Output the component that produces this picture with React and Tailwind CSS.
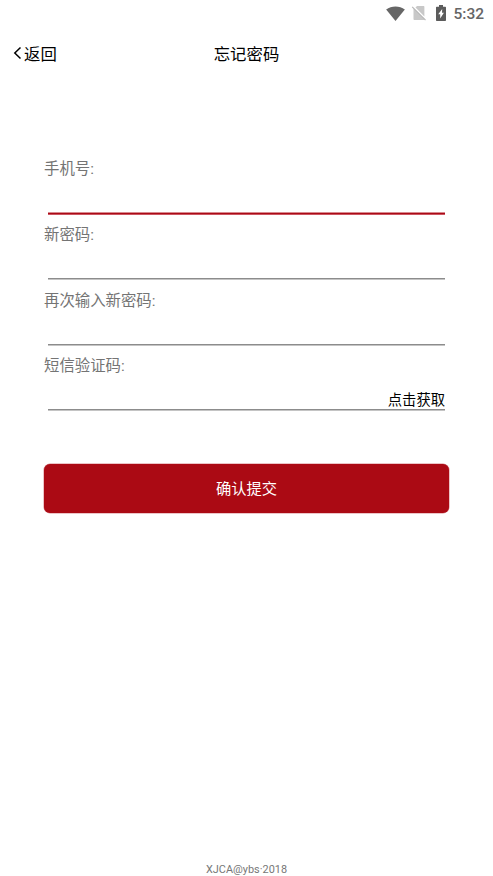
import clsx from 'clsx';

const fields = [
  { id: 'phone', label: '手机号:', type: 'tel', active: true },
  { id: 'password', label: '新密码:', type: 'password' },
  { id: 'confirm', label: '再次输入新密码:', type: 'password' },
  { id: 'code', label: '短信验证码:', type: 'text', action: '点击获取' },
];

function StatusBar() {
  return (
    <div className="flex h-7 items-center justify-end pr-[9px] pb-0.5 text-[#666]">
      <svg width="19" height="15" viewBox="0 0 20 16" fill="currentColor">
        <path d="M0 3.7C5.7-.7 14.3-.7 20 3.7L10 16z" />
      </svg>
      {/* No SIM */}
      <svg className="ml-1.5" width="16" height="16" viewBox="0 0 16 16">
        <path d="M6 1h6.4c.6 0 1 .4 1 1v9.600L4.500 2.500z" fill="#c8c8c8" />
        <path d="M2.500 3.100l11 11c-.2.500-.5.900-1 .9h-9c-.6 0-1-.4-1-1z" fill="#c8c8c8" />
        <path d="M1.200 1.800l13.300 13.300" stroke="#b8b8b8" strokeWidth="1.200" />
      </svg>
      {/* Charging battery */}
      <svg className="ml-[9px]" width="10" height="16" viewBox="0 0 10 16">
        <path d="M3 0h4v1.700h2c.6 0 1 .4 1 1v12.300c0 .6-.4 1-1 1H1c-.6 0-1-.4-1-1v-12.300c0-.6.4-1 1-1h2z" fill="#5c5c5c" />
        <path d="M6.200 4L2.200 9.300h2v4.300l3.700-5.800H6z" fill="#fff" />
      </svg>
      <span className="ml-[7px] pt-px font-[Roboto] text-[15.500px] leading-4 font-medium">5:32</span>
    </div>
  );
}

function Header() {
  return (
    <header className="grid h-[52px] grid-cols-[1fr_auto_1fr] items-center pt-0.5 text-[16.4px] text-black">
      <button className="flex items-center pl-[13px]">
        <svg className="-mt-1" width="11" height="14" viewBox="0 0 11 14" fill="none" stroke="currentColor" strokeWidth="1.5">
          <path d="M7.500 1.500L1.800 7l5.700 5.500" />
        </svg>
        返回
      </button>
      <h1>忘记密码</h1>
    </header>
  );
}

function Field({ id, label, type, active, action }) {
  return (
    <div className="flex h-[65.7px] flex-col">
      <label htmlFor={id} className="text-[15.4px] leading-6 text-[#747474]">
        {label}
      </label>
      <div
        className={clsx(
          'mx-1 flex items-end border-b',
          active
            ? 'h-[33px] border-[#aa0a16] shadow-[0_1px_0_#cc5560,inset_0_-1px_0_#d98a90]'
            : 'h-8 border-[#8c8c8c] shadow-[0_1px_0_#c4c4c4]'
        )}
      >
        <input id={id} type={type} className="h-full min-w-0 flex-1 outline-none" />
        {action && <button className="text-[14.3px] leading-[17px] text-black">{action}</button>}
      </div>
    </div>
  );
}

export default function App() {
  return (
    <div className="flex h-screen flex-col bg-white font-['Roboto','Noto_Sans_CJK_SC',sans-serif]">
      <StatusBar />
      <Header />
      <form className="flex flex-1 flex-col px-11 pt-[77.2px]">
        {fields.map((field) => (
          <Field key={field.id} {...field} />
        ))}
        <button
          type="button"
          className="mt-[44.5px] h-[49px] rounded-md bg-[#ab0a14] pt-0.5 text-[15.3px] text-white shadow-[0_0_0_0.5px_#d98a90]"
        >
          确认提交
        </button>
      </form>
      <footer className="text-center text-[10.900px] leading-3 text-[#777]">XJCA@ybs·2018</footer>
    </div>
  );
}
